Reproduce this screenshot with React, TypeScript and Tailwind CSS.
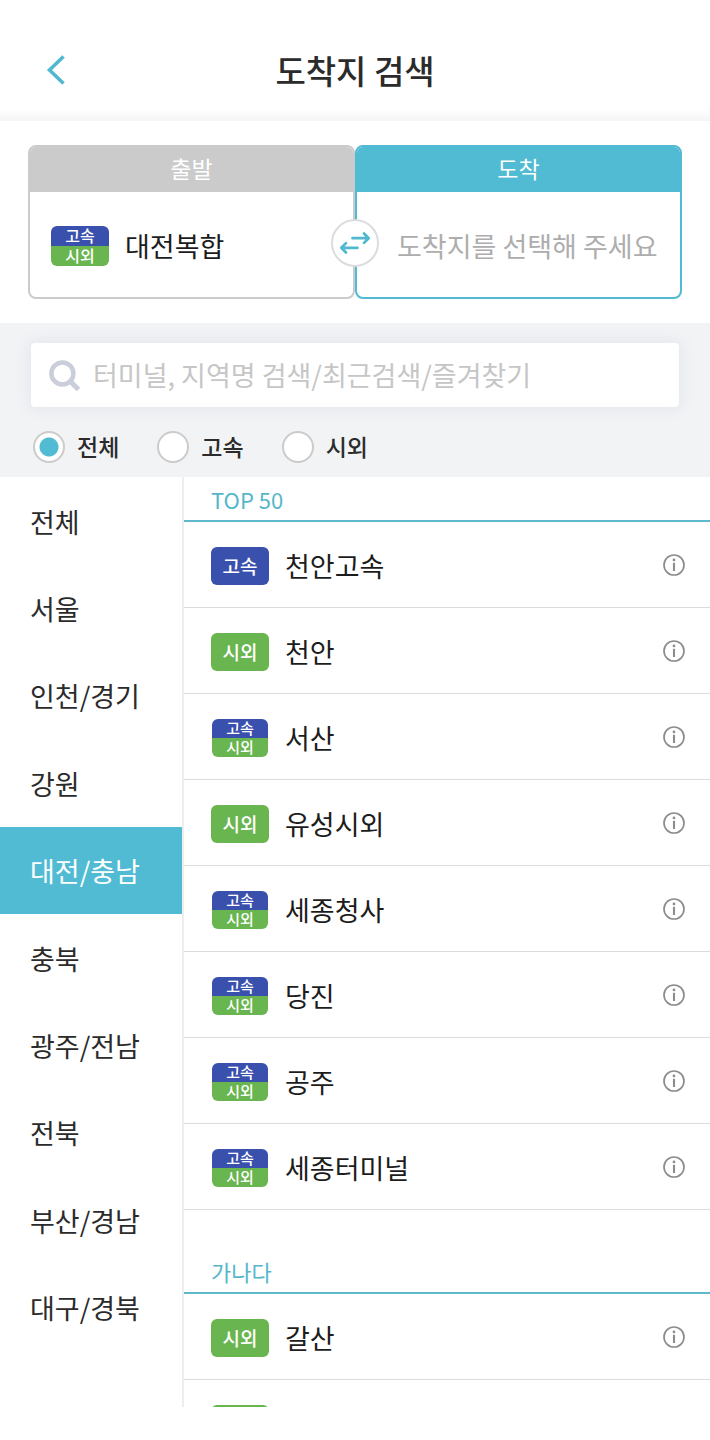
import { useState } from "react";

type Kind = "express" | "intercity" | "both";
type Terminal = { name: string; kind: Kind };

const regions = [
  "전체",
  "서울",
  "인천/경기",
  "강원",
  "대전/충남",
  "충북",
  "광주/전남",
  "전북",
  "부산/경남",
  "대구/경북",
];

const popular: Terminal[] = [
  { name: "천안고속", kind: "express" },
  { name: "천안", kind: "intercity" },
  { name: "서산", kind: "both" },
  { name: "유성시외", kind: "intercity" },
  { name: "세종청사", kind: "both" },
  { name: "당진", kind: "both" },
  { name: "공주", kind: "both" },
  { name: "세종터미널", kind: "both" },
];

const alphabetical: Terminal[] = [
  { name: "갈산", kind: "intercity" },
  { name: "", kind: "intercity" },
];

const filters = ["전체", "고속", "시외"];

function SplitBadge({ large = false }: { large?: boolean }) {
  return (
    <span
      className={
        large
          ? "grid h-10 w-[58px] shrink-0 grid-rows-2 text-center text-base/[18px] font-medium text-white"
          : "mx-px grid h-[38px] w-14 shrink-0 grid-rows-2 text-center text-[15px]/[17px] font-medium text-white"
      }
    >
      <span className="rounded-t-md bg-[#3a50ad]">고속</span>
      <span className="rounded-b-md bg-[#69b550]">시외</span>
    </span>
  );
}

function Badge({ kind }: { kind: Kind }) {
  if (kind === "both") return <SplitBadge />;
  return (
    <span
      className={
        kind === "express"
          ? "h-[38px] w-[58px] shrink-0 rounded-md bg-[#3a50ad] text-center text-[19px]/[38px] font-medium text-white"
          : "h-[38px] w-[58px] shrink-0 rounded-md bg-[#69b550] text-center text-[19px]/[38px] font-medium text-white"
      }
    >
      {kind === "express" ? "고속" : "시외"}
    </span>
  );
}

function InfoIcon() {
  return (
    <svg viewBox="0 0 22 22" className="size-[22px]" fill="none" aria-hidden="true">
      <circle cx="11" cy="11" r="10" stroke="#8c8c8c" strokeWidth="1.7" />
      <circle cx="11" cy="5.9" r="1.4" fill="#8c8c8c" />
      <path d="M11 8.8V17" stroke="#8c8c8c" strokeWidth="2.1" />
    </svg>
  );
}

function TerminalRow({ terminal }: { terminal: Terminal }) {
  return (
    <li className="flex h-[86px] items-center border-b border-[#dcdcdc] pr-[25px] pl-[27px]">
      <button type="button" className="flex flex-1 items-center gap-4 pt-0.5 text-left text-[27px]/[38px] text-[#1c1c1c]">
        <Badge kind={terminal.kind} />
        <span>{terminal.name}</span>
      </button>
      <button type="button" aria-label="정보">
        <InfoIcon />
      </button>
    </li>
  );
}

export default function App() {
  const [region, setRegion] = useState("대전/충남");
  const [filter, setFilter] = useState("전체");

  return (
    <div className="flex h-screen flex-col overflow-hidden bg-white pb-[33px] font-['Noto_Sans_CJK_KR',sans-serif] text-[#2b2b2b]">
      <header className="grid h-[121px] shrink-0 grid-cols-[1fr_auto_1fr] items-center bg-linear-to-t from-[#f5f5f5] to-white to-10% px-[46px] pt-[18px]">
        <button type="button" aria-label="뒤로" className="justify-self-start">
          <svg viewBox="0 0 20 30" className="h-[30px] w-5" fill="none" aria-hidden="true">
            <path d="M17.5 1.5L3.5 15L17.5 28.5" stroke="#50b8cf" strokeWidth="3.6" />
          </svg>
        </button>
        <h1 className="text-[33px]/[48px] font-medium">도착지 검색</h1>
      </header>

      <section className="relative grid shrink-0 grid-cols-2 px-7 py-6 text-center">
        <div className="overflow-hidden rounded-lg border-2 border-[#cbcbcb]">
          <h2 className="h-[45px] bg-[#cbcbcb] text-[23px]/[42px] text-white">출발</h2>
          <button type="button" className="flex h-[105px] w-full items-center gap-4 pt-0.5 pl-[21px] text-[27px]/[40px] text-[#1c1c1c]">
            <SplitBadge large />
            <span>대전복합</span>
          </button>
        </div>
        <div className="overflow-hidden rounded-lg border-2 border-[#50bbd3]">
          <h2 className="h-[45px] bg-[#50bbd3] text-[23px]/[42px] text-white">도착</h2>
          <button type="button" className="flex h-[105px] w-full items-center pt-0.5 pl-10 text-[27px]/[40px] whitespace-nowrap text-[#adadad]">
            도착지를 선택해 주세요
          </button>
        </div>
        <button
          type="button"
          aria-label="출발지와 도착지 바꾸기"
          className="absolute top-[98px] left-1/2 grid size-12 -translate-x-1/2 place-items-center rounded-full border-2 border-[#dadcde] bg-white"
        >
          <svg
            viewBox="0 0 32 24"
            className="h-6 w-8"
            fill="none"
            stroke="#50b8cf"
            strokeWidth="2.7"
            strokeLinecap="round"
            strokeLinejoin="round"
            aria-hidden="true"
          >
            <path d="M13.5 7.2H29.5M25 2.5L29.7 7.2L25 11.9" />
            <path d="M18.5 16.8H2.5M7 12.1L2.3 16.8L7 21.5" />
          </svg>
        </button>
      </section>

      <section className="shrink-0 bg-[#f2f3f5] px-[31px] pt-5 pb-[14px]">
        <label className="flex h-16 items-center gap-3 rounded-sm bg-white pl-[18px] shadow-[0_0_14px_3px_#e4e7ed]">
          <svg viewBox="0 0 32 32" className="size-8 shrink-0" fill="none" stroke="#c9ceda" aria-hidden="true">
            <circle cx="13.4" cy="14.4" r="11" strokeWidth="4.5" />
            <path d="M21 22L29.5 30.5" strokeWidth="5" />
          </svg>
          <input
            type="text"
            aria-label="터미널 검색"
            placeholder="터미널, 지역명 검색/최근검색/즐겨찾기"
            className="min-w-0 flex-1 bg-transparent text-[27px]/[40px] outline-none placeholder:text-[#c6c6c6]"
          />
        </label>
        <div className="mt-[23px] flex gap-[38px] pl-0.5">
          {filters.map((name) => (
            <label key={name} className="flex items-center gap-3 text-[23px]/[33px] font-medium">
              <input
                type="radio"
                name="kind"
                checked={filter === name}
                onChange={() => setFilter(name)}
                className="size-8 appearance-none rounded-full border-2 border-[#cbcbcb] bg-white checked:bg-[radial-gradient(circle,#50bbd3_9px,white_10px)]"
              />
              {name}
            </label>
          ))}
        </div>
      </section>

      <main className="flex min-h-0 flex-1">
        <nav className="w-[184px] shrink-0 overflow-y-auto border-r-2 border-[#eeeeef] [scrollbar-width:none]">
          <ul className="grid min-h-[874px] auto-rows-fr">
            {regions.map((name) => (
              <li key={name}>
                <button
                  type="button"
                  onClick={() => setRegion(name)}
                  className={
                    region === name
                      ? "h-full w-full bg-[#50bbd3] pt-0.5 pl-[30px] text-left text-[27px]/[40px] text-white"
                      : "h-full w-full pt-0.5 pl-[30px] text-left text-[27px]/[40px]"
                  }
                >
                  {name}
                </button>
              </li>
            ))}
          </ul>
        </nav>
        <div className="min-w-0 flex-1 overflow-y-auto [scrollbar-width:none]">
          <h2 className="h-[45px] border-b-2 border-[#60b9cb] pt-[3px] pl-[27px] text-[22px]/[38px] text-[#55b6ca]">TOP 50</h2>
          <ul>
            {popular.map((terminal) => (
              <TerminalRow key={terminal.name} terminal={terminal} />
            ))}
          </ul>
          <h2 className="mt-[39px] h-[45px] border-b-2 border-[#60b9cb] pt-[3px] pl-[27px] text-[22px]/[38px] text-[#55b6ca]">가나다</h2>
          <ul>
            {alphabetical.map((terminal) => (
              <TerminalRow key={terminal.name} terminal={terminal} />
            ))}
          </ul>
        </div>
      </main>
    </div>
  );
}
